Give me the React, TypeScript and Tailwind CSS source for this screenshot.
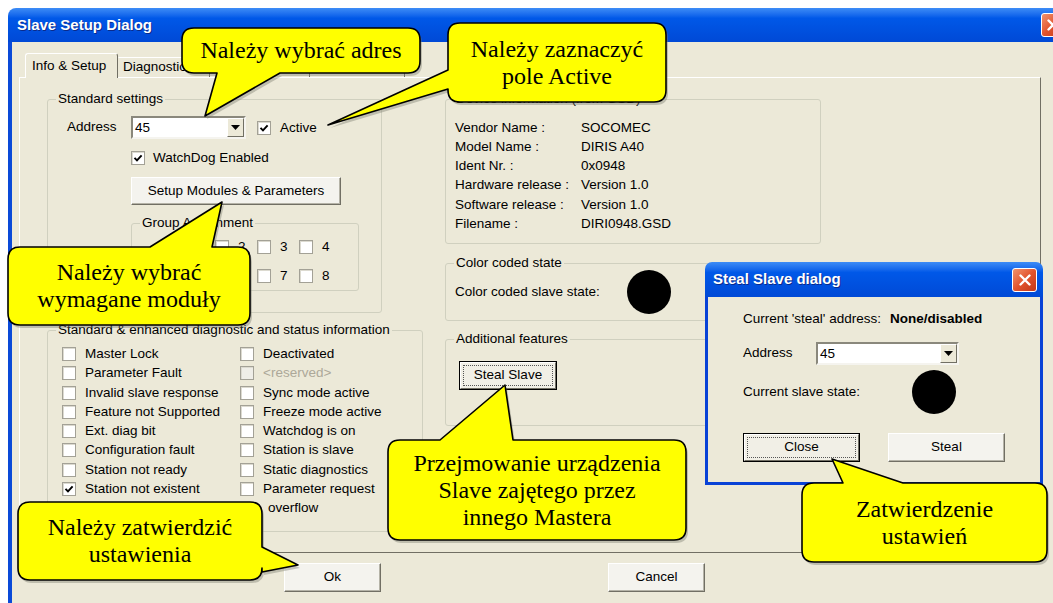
import React from 'react';

type Side = 'top' | 'bottom' | 'left' | 'right';

interface Callout {
  x: number;
  y: number;
  w: number;
  h: number;
  side: Side;
  a: number;
  b: number;
  tx: number;
  ty: number;
  lines: string[];
  box: string;
}

const callouts: Callout[] = [
  { x: 182, y: 28, w: 238, h: 45, side: 'bottom', a: 217, b: 280, tx: 205, ty: 116, lines: ['Należy wybrać adres'], box: 'left-[182px] top-[28px] w-[238px] h-[45px]' },
  { x: 448, y: 23, w: 218, h: 79, side: 'left', a: 70, b: 89, tx: 328, ty: 125, lines: ['Należy zaznaczyć', 'pole Active'], box: 'left-[448px] top-[23px] w-[218px] h-[79px]' },
  { x: 8, y: 247, w: 242, h: 78, side: 'top', a: 150, b: 212, tx: 222, ty: 202, lines: ['Należy wybrać', 'wymagane moduły'], box: 'left-[8px] top-[247px] w-[242px] h-[78px]' },
  { x: 18, y: 502, w: 244, h: 78, side: 'right', a: 547, b: 572, tx: 298, ty: 565, lines: ['Należy zatwierdzić', 'ustawienia'], box: 'left-[18px] top-[502px] w-[244px] h-[78px]' },
  { x: 388, y: 440, w: 298, h: 100, side: 'top', a: 440, b: 513, tx: 505, ty: 385, lines: ['Przejmowanie urządzenia', 'Slave zajętego przez', 'innego Mastera'], box: 'left-[388px] top-[440px] w-[298px] h-[100px]' },
  { x: 802, y: 483, w: 245, h: 79, side: 'top', a: 843, b: 903, tx: 832, ty: 459, lines: ['Zatwierdzenie', 'ustawień'], box: 'left-[802px] top-[483px] w-[245px] h-[79px]' },
];

function bubblePath(c: Callout, r = 12) {
  const { x, y, w, h } = c;
  const R = x + w;
  const B = y + h;
  let d = `M${x + r},${y}`;
  if (c.side === 'top') d += ` L${c.a},${y} L${c.tx},${c.ty} L${c.b},${y}`;
  d += ` L${R - r},${y} Q${R},${y} ${R},${y + r}`;
  if (c.side === 'right') d += ` L${R},${c.a} L${c.tx},${c.ty} L${R},${c.b}`;
  d += ` L${R},${B - r} Q${R},${B} ${R - r},${B}`;
  if (c.side === 'bottom') d += ` L${c.b},${B} L${c.tx},${c.ty} L${c.a},${B}`;
  d += ` L${x + r},${B} Q${x},${B} ${x},${B - r}`;
  if (c.side === 'left') d += ` L${x},${c.b} L${c.tx},${c.ty} L${x},${c.a}`;
  d += ` L${x},${y + r} Q${x},${y} ${x + r},${y} Z`;
  return d;
}

const Check = ({ checked = false, disabled = false }: { checked?: boolean; disabled?: boolean }) => (
  <span
    className={`flex h-[14px] w-[14px] shrink-0 items-center justify-center border border-[#a3a196] shadow-[inset_1px_1px_0_#dcdad0] ${
      disabled ? 'bg-[#efeee8]' : 'bg-white'
    }`}
  >
    {checked && (
      <svg width="10" height="10" viewBox="0 0 10 10">
        <path d="M1.5 4.8 L4 7.4 L8.6 2.4" fill="none" stroke="#000" strokeWidth="1.9" />
      </svg>
    )}
  </span>
);

const Combo = ({ className }: { className: string }) => (
  <div className={`flex h-[23px] border-2 border-t-[#8a887c] border-l-[#8a887c] border-r-[#f5f4ef] border-b-[#f5f4ef] bg-white ${className}`}>
    <div className="flex-1 pl-[2px] leading-[19px]">45</div>
    <div className="flex w-[17px] items-center justify-center border border-t-white border-l-white border-r-[#716f64] border-b-[#716f64] bg-[#ece9d8]">
      <svg width="9" height="5" viewBox="0 0 9 5">
        <path d="M0 0 H9 L4.5 5 Z" fill="#000" />
      </svg>
    </div>
  </div>
);

const Btn = ({ label, className = '', isDefault = false }: { label: string; className?: string; isDefault?: boolean }) =>
  isDefault ? (
    <div className={`border border-black ${className}`}>
      <div className="flex h-full w-full border border-t-white border-l-white border-r-[#716f64] border-b-[#716f64] bg-[#f1efe6] p-[2px]">
        <div className="flex h-full w-full items-center justify-center border border-dotted border-[#555]">{label}</div>
      </div>
    </div>
  ) : (
    <div
      className={`flex items-center justify-center border border-t-white border-l-white border-r-[#716f64] border-b-[#716f64] bg-[#f4f3ee] shadow-[inset_-1px_-1px_0_#b5b3a7] ${className}`}
    >
      {label}
    </div>
  );

const CloseX = ({ className }: { className: string }) => (
  <div
    className={`flex items-center justify-center rounded-[3px] border border-white bg-linear-to-br from-[#f0926c] via-[#e2542d] to-[#c1371a] ${className}`}
  >
    <svg width="12" height="12" viewBox="0 0 12 12">
      <path d="M1.5 1.5 L10.5 10.5 M10.5 1.5 L1.5 10.5" stroke="#fff" strokeWidth="2.4" strokeLinecap="round" />
    </svg>
  </div>
);

const GroupBox = ({ label, className, children }: { label: string; className: string; children?: React.ReactNode }) => (
  <div className={`relative rounded-[3px] border border-[#d0d0bf] ${className}`}>
    <span className="absolute -top-[9px] left-[8px] bg-[#ece9d8] px-[2px] leading-[16px]">{label}</span>
    {children}
  </div>
);

const diagLeft: [string, boolean][] = [
  ['Master Lock', false],
  ['Parameter Fault', false],
  ['Invalid slave response', false],
  ['Feature not Supported', false],
  ['Ext. diag bit', false],
  ['Configuration fault', false],
  ['Station not ready', false],
  ['Station not existent', true],
  ['', false],
];

const diagRight = [
  'Deactivated',
  '<reserved>',
  'Sync mode active',
  'Freeze mode active',
  'Watchdog is on',
  'Station is slave',
  'Static diagnostics',
  'Parameter request',
  'overflow',
];

const deviceInfo = [
  ['Vendor Name :', 'SOCOMEC'],
  ['Model Name :', 'DIRIS A40'],
  ['Ident Nr. :', '0x0948'],
  ['Hardware release :', 'Version 1.0'],
  ['Software release :', 'Version 1.0'],
  ['Filename :', 'DIRI0948.GSD'],
];

export default function App() {
  return (
    <div className="relative h-[603px] w-[1053px] overflow-hidden bg-white font-['Liberation_Sans',Arial,sans-serif] text-[13.5px] text-black">
      {/* Main dialog */}
      <div className="ml-[8px] mt-[8px] flex h-[600px] w-[1062px] flex-col">
        <div className="flex h-[34px] shrink-0 items-center justify-between rounded-t-[8px] bg-linear-to-b from-[#3d8cf6] via-[#0058e8] via-30% to-[#0049d6] pl-[9px] pr-[5px]">
          <span className="text-[15px] font-bold text-white [text-shadow:1px_1px_0_#0b2a8a]">Slave Setup Dialog</span>
          <CloseX className="h-[24px] w-[24px]" />
        </div>

        <div className="flex flex-1 flex-col border-l-4 border-l-[#0a4ad8] bg-[#ece9d8]">
          {/* Tabs */}
          <div className="mt-[11px] flex h-[24px] items-end pl-[13px]">
            <div className="relative z-10 -mb-px flex h-[25px] w-[93px] items-center rounded-t-[3px] border border-b-0 border-t-white border-l-white border-r-[#716f64] bg-[#ece9d8] pl-[6px]">
              Info &amp; Setup
            </div>
            <div className="flex h-[20px] w-[92px] items-center border border-b-0 border-t-white border-r-[#716f64] border-l-transparent pl-[4px]">
              Diagnostics
            </div>
            <div className="h-[20px] w-[100px] border border-b-0 border-t-white border-r-[#716f64] border-l-transparent" />
            <div className="h-[20px] w-[95px] border border-b-0 border-t-white border-r-[#716f64] border-l-transparent" />
          </div>

          {/* Tab panel */}
          <div className="ml-[7px] flex h-[476px] w-[1022px] gap-[22px] border border-t-white border-l-white border-r-[#716f64] border-b-[#716f64] bg-[#ece9d8] pl-[27px]">
            {/* Left column */}
            <div className="flex w-[376px] flex-col">
              <GroupBox label="Standard settings" className="mt-[21px] h-[214px] w-[335px]">
                <div className="mt-[16px] flex items-center pl-[19px]">
                  <span className="w-[64px]">Address</span>
                  <Combo className="w-[115px]" />
                  <span className="ml-[11px]">
                    <Check checked />
                  </span>
                  <span className="ml-[9px] mt-[2px]">Active</span>
                </div>
                <div className="mt-[12px] flex h-[14px] items-center pl-[83px]">
                  <Check checked />
                  <span className="ml-[8px]">WatchDog Enabled</span>
                </div>
                <Btn label="Setup Modules & Parameters" className="ml-[83px] mt-[12px] h-[28px] w-[210px]" />
                <GroupBox label="Group Assignment" className="ml-[83px] mt-[18px] h-[68px] w-[228px]">
                  <div className="grid grid-cols-[42px_42px_42px_42px] gap-y-[15px] pl-[41px] pt-[16px]">
                    {['1', '2', '3', '4', '5', '6', '7', '8'].map((n) => (
                      <div key={n} className="flex h-[14px] items-center">
                        <Check />
                        <span className="ml-[9px]">{n}</span>
                      </div>
                    ))}
                  </div>
                </GroupBox>
              </GroupBox>

              <GroupBox label="Standard & enhanced diagnostic and status information" className="mt-[17px] h-[202px] w-[376px]">
                <div className="grid grid-cols-[178px_1fr] auto-rows-[19.25px] pl-[14px] pt-[13.5px]">
                  {diagLeft.map(([l, c], i) => (
                    <React.Fragment key={i}>
                      <div className="flex items-center">
                        {l && <Check checked={c} />}
                        <span className="ml-[9px] whitespace-nowrap">{l}</span>
                      </div>
                      <div className="flex items-center">
                        {i === 8 ? (
                          <span className="ml-[28px]">{diagRight[i]}</span>
                        ) : (
                          <>
                            <Check disabled={i === 1} />
                            <span className={`ml-[9px] whitespace-nowrap ${i === 1 ? 'text-[#aca899]' : ''}`}>{diagRight[i]}</span>
                          </>
                        )}
                      </div>
                    </React.Fragment>
                  ))}
                </div>
              </GroupBox>
            </div>

            {/* Right column */}
            <div className="flex w-[376px] flex-col">
              <GroupBox label="Device information (from GSD)" className="mt-[21px] h-[145px] w-[376px]">
                <div className="grid grid-cols-[126px_1fr] auto-rows-[19.2px] pl-[9px] pt-[18.4px]">
                  {deviceInfo.map(([k, v]) => (
                    <React.Fragment key={k}>
                      <span className="flex items-center whitespace-nowrap">{k}</span>
                      <span className="flex items-center">{v}</span>
                    </React.Fragment>
                  ))}
                </div>
              </GroupBox>
              <GroupBox label="Color coded state" className="mt-[19px] h-[58px] w-[376px]">
                <div className="flex h-full items-center pl-[9px]">
                  <span className="w-[172px]">Color coded slave state:</span>
                  <div className="h-[44px] w-[44px] rounded-full bg-black" />
                </div>
              </GroupBox>
              <GroupBox label="Additional features" className="mt-[18px] h-[87px] w-[376px]">
                <Btn label="Steal Slave" isDefault className="ml-[13px] mt-[21px] h-[29px] w-[98px]" />
              </GroupBox>
            </div>
          </div>

          {/* Bottom buttons */}
          <div className="mt-[10px] flex gap-[227px] pl-[272px]">
            <Btn label="Ok" className="h-[29px] w-[97px]" />
            <Btn label="Cancel" className="h-[29px] w-[97px]" />
          </div>
        </div>
      </div>

      {/* Steal Slave dialog */}
      <div className="absolute left-[705px] top-[262px] flex h-[223px] w-[338px] flex-col">
        <div className="flex h-[35px] shrink-0 items-center justify-between rounded-t-[7px] bg-linear-to-b from-[#3d8cf6] via-[#0058e8] via-30% to-[#0049d6] pl-[8px] pr-[6px]">
          <span className="text-[15px] font-bold text-white [text-shadow:1px_1px_0_#0b2a8a]">Steal Slave dialog</span>
          <CloseX className="h-[24px] w-[25px]" />
        </div>
        <div className="flex flex-1 flex-col border-x-[3px] border-b-[3px] border-[#0842d6] bg-[#ece9d8] pl-[35px]">
          <div className="mt-[14px] flex h-[16px] items-center">
            <span className="w-[147px]">Current 'steal' address:</span>
            <span className="font-bold">None/disabled</span>
          </div>
          <div className="mt-[15px] flex items-center">
            <span className="w-[73px]">Address</span>
            <Combo className="w-[143px]" />
          </div>
          <div className="mt-[5px] flex h-[44px] items-center">
            <span className="w-[169px]">Current slave state:</span>
            <div className="h-[44px] w-[44px] rounded-full bg-black" />
          </div>
          <div className="mt-[19px] flex gap-[28px]">
            <Btn label="Close" isDefault className="h-[29px] w-[117px]" />
            <Btn label="Steal" className="h-[29px] w-[117px]" />
          </div>
        </div>
      </div>

      {/* Callouts */}
      <svg className="pointer-events-none absolute inset-0" width="1053" height="603" viewBox="0 0 1053 603">
        {callouts.map((c, i) => (
          <path key={`s${i}`} d={bubblePath(c)} transform="translate(2 3)" fill="#7a7a6e" opacity="0.4" />
        ))}
        {callouts.map((c, i) => (
          <path key={i} d={bubblePath(c)} fill="#ffff00" stroke="#000" strokeWidth="1.6" strokeLinejoin="round" />
        ))}
      </svg>
      {callouts.map((c, i) => (
        <div
          key={i}
          className={`absolute flex flex-col items-center justify-center text-center font-['Liberation_Serif','Times_New_Roman',serif] text-[24px] leading-[27px] text-black ${c.box}`}
        >
          {c.lines.map((l) => (
            <span key={l} className="whitespace-nowrap">
              {l}
            </span>
          ))}
        </div>
      ))}
    </div>
  );
}
